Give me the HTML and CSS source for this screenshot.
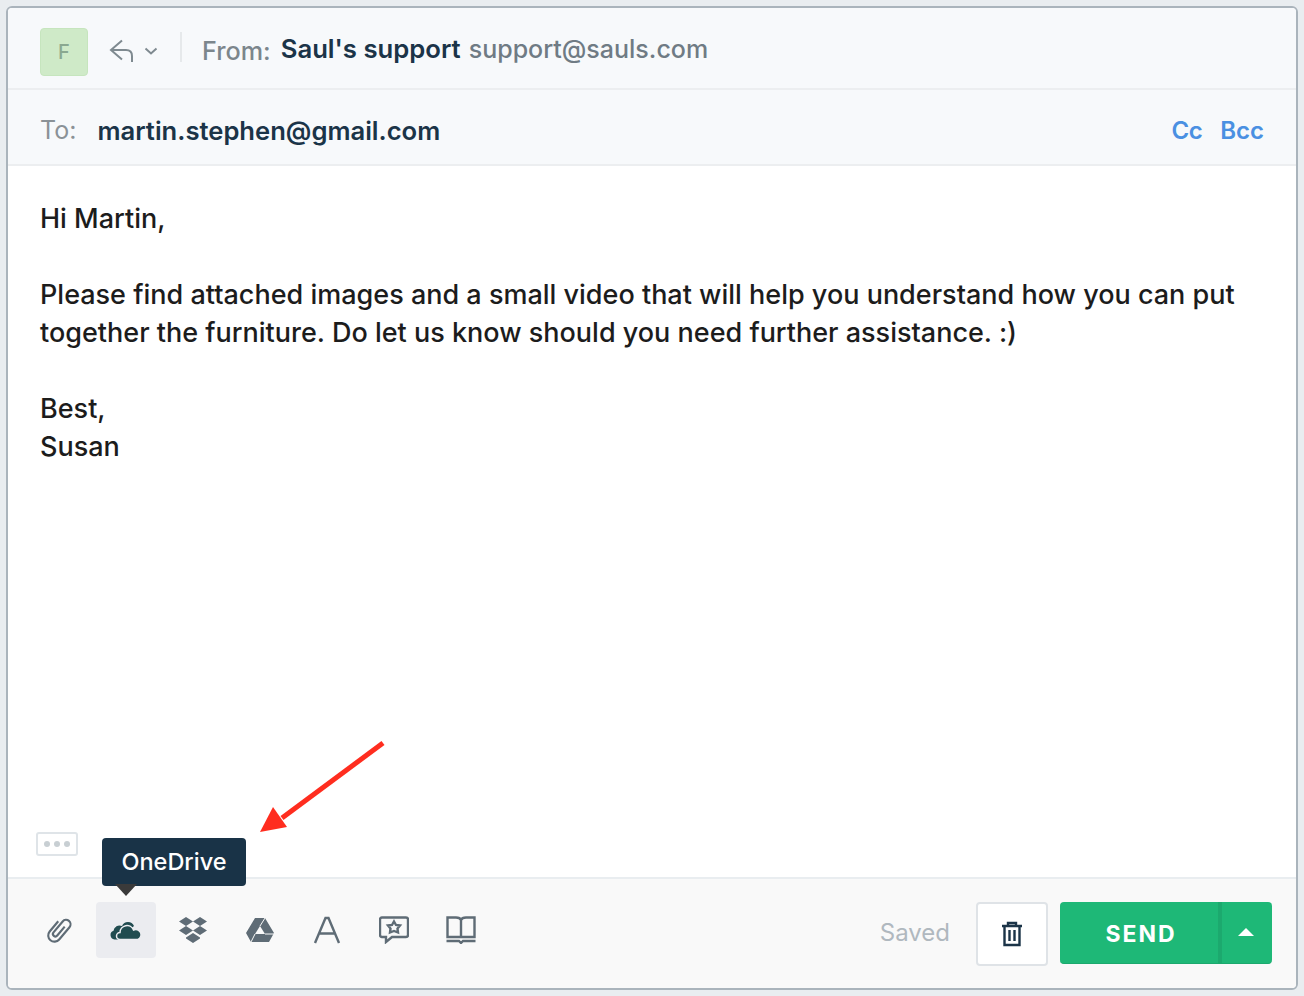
FILE: index.html
```html
<!DOCTYPE html>
<html lang="en">
<head>
    <meta charset="UTF-8">
    <title>Compose</title>
    <link rel="stylesheet" href="styles.css">
</head>
<body>
    <div class="composer">
        <div class="from-row">
            <div class="avatar">F</div>
            <svg class="reply-icon" width="26" height="26" viewBox="0 0 26 26"><path d="M13 1.500 L2 11 L13 20.500 M2.500 11 H17 Q23 11 23 17 V23" /></svg>
            <svg class="caret-icon" width="14" height="8" viewBox="0 0 14 8"><path d="M1.500 1.500 L7 6.500 L12.500 1.500" /></svg>
            <div class="divider"></div>
            <span class="from-label">From:</span>
            <span class="from-name">Saul's support</span>
            <span class="from-mail">support@sauls.com</span>
        </div>
        <div class="to-row">
            <span class="to-label">To:</span>
            <span class="to-mail">martin.stephen@gmail.com</span>
            <a class="cc-link">Cc</a>
            <a class="cc-link">Bcc</a>
        </div>
        <div class="body-area">
            <p>Hi Martin,</p>
            <p>Please find attached images and a small video that will help you understand how you can put together the furniture. Do let us know should you need further assistance. :)</p>
            <p>Best,<br>Susan</p>
            <div class="more-btn"><i></i><i></i><i></i></div>
        </div>
        <div class="toolbar">
            <div class="tool">
                <svg class="stroke-icon" width="32" height="32" viewBox="0 0 36 36"><path transform="rotate(40 18 18) translate(3 1)" d="M17.500 10 V23 a2.750 2.750 0 0 1 -5.500 0 V7 a5 5 0 0 1 10 0 V25 a7 7 0 0 1 -14 0 V10" /></svg>
            </div>
            <div class="tool active">
                <svg width="32" height="20" viewBox="0 0 32 20"><path class="cloud" d="M8 19.500 H4.500 A4.500 4.500 0 0 1 3.500 10.800 A6 6 0 0 1 12 6 A6.500 6.500 0 0 1 24 6 Z" /><path class="cloud cloud-front" d="M10 19.500 A3.500 3.500 0 0 1 10 12.500 A7 7 0 0 1 23.500 10 A5 5 0 0 1 28 19.500 Z" /></svg>
            </div>
            <div class="tool">
                <svg class="fill-icon" width="28" height="26" viewBox="0 0 28 26"><path d="M7 0 L14 4.500 L7 9 L0 4.500 Z M21 0 L28 4.500 L21 9 L14 4.500 Z M7 9 L14 13.500 L7 18 L0 13.500 Z M21 9 L28 13.500 L21 18 L14 13.500 Z M7 20.500 L14 16 L21 20.500 V21.500 L14 26 L7 21.500 Z" /></svg>
            </div>
            <div class="tool">
                <svg class="fill-icon" width="28" height="24" viewBox="0 0 28 24"><path fill-rule="evenodd" d="M9 0 H19 L28 15 L23 24 H5 L0 15 Z M14 8 L9 16 H19 Z" /><path class="drive-line" d="M19 0 L14 8 M28 16 H19 M5 24 L9 16" /></svg>
            </div>
            <div class="tool">
                <svg class="stroke-icon" width="28" height="28" viewBox="0 0 28 28"><path d="M2 27 L12.500 2 H15.500 L26 27 M6.500 17.500 H21.500" /></svg>
            </div>
            <div class="tool">
                <svg class="stroke-icon" width="30" height="28" viewBox="0 0 30 28"><path d="M3 1.500 H27 Q29 1.500 29 3.500 V19 Q29 21 27 21 H13 L7 26 V21 H3 Q1 21 1 19 V3.500 Q1 1.500 3 1.500 Z" /><path d="M15 5.500 L17 9 L21 9.500 L18.500 12.500 L19 16.500 L15 15 L11 16.500 L11.500 12.500 L9 9.500 L13 9 Z" /></svg>
            </div>
            <div class="tool">
                <svg class="stroke-icon" width="30" height="28" viewBox="0 0 30 28"><path d="M1.500 1.500 H10 Q14 1.500 15 4 Q16 1.500 20 1.500 H28.500 V21 H1.500 Z M15 4 V21" /><path d="M0.500 25 H13 L15 27 L17 25 H29.500" /></svg>
            </div>
            <span class="saved">Saved</span>
            <button class="trash-btn">
                <svg width="22" height="26" viewBox="0 0 22 26"><path d="M1 5 H21 M7 5 V2 H15 V5 M3.500 5 V24 H18.500 V5 M8.500 9 V20 M13.500 9 V20" /></svg>
            </button>
            <div class="send-group">
                <button class="send-btn">SEND</button>
                <button class="send-more"><span class="arrow-up"></span></button>
            </div>
        </div>
    </div>

    <!-- tooltip + annotation arrow sit above the composer -->
    <div class="tooltip">OneDrive</div>
    <svg class="annotation" width="130" height="96" viewBox="0 0 130 96"><path class="shaft" d="M123 2 L22 77" /><path class="head" d="M0 91 L13 66 L27 86 Z" /></svg>
</body>
</html>
```

FILE: styles.css
```css
* { box-sizing: border-box; }
html, body { margin: 0; height: 996px; overflow: hidden; }
body { position: relative; padding: 6px; background-color: #e9edf0; font-family: Inter, "Noto Sans", sans-serif; color: #1b3448; }

.composer { display: flex; flex-direction: column; height: 984px; background-color: #fff; border: 2px solid #aab4bc; border-radius: 6px; overflow: hidden; }

.from-row { display: flex; align-items: center; height: 82px; flex: none; padding: 8px 0 0 32px; background-color: #f7f9fb; border-bottom: 2px solid #eceef0; }
.avatar { display: flex; align-items: center; justify-content: center; width: 48px; height: 48px; background-color: #cfeac8; border: 1px solid #c6e5be; border-radius: 4px; color: #8aa890; font-size: 20px; font-weight: 500; }
.reply-icon { margin-left: 21px; fill: none; stroke: #7f8a90; stroke-width: 2; }
.caret-icon { margin: -3px 0 0 9px; fill: none; stroke: #7f8a90; stroke-width: 2; }
.divider { width: 2px; height: 30px; margin: 0 20px 10px 22px; background-color: #e6e9eb; }
.from-label { margin-top: -3px; color: #7c868c; font-size: 25.200px; font-weight: 450; }
.from-name { margin: -8px 0 0 10px; font-size: 25.700px; font-weight: 600; }
.from-mail { margin: -7px 0 0 8px; color: #6f7b84; font-size: 25px; font-weight: 450; }

.to-row { display: flex; align-items: center; height: 76px; flex: none; padding: 6px 32px 0; background-color: #f7f9fb; border-bottom: 2px solid #eceef0; font-size: 25.600px; }
.to-label { width: 57.500px; color: #8b9297; font-size: 25px; }
.to-mail { flex: 1; font-weight: 600; }
.cc-link { margin-left: 18px; color: #4a90e2; font-size: 24px; font-weight: 600; }
.cc-link:first-of-type { letter-spacing: -0.500px; }

.body-area { position: relative; flex: 1; padding: 34px 32px 0; color: #1c1c1c; font-size: 27px; font-weight: 450; line-height: 38px; }
.body-area p { margin: 0 0 38px; }
.more-btn { position: absolute; left: 28px; top: 666px; display: flex; align-items: center; justify-content: center; gap: 4px; width: 42px; height: 24px; border: 2px solid #dfe4e8; border-radius: 3px; }
.more-btn i { width: 6px; height: 6px; background-color: #c8cfd3; border-radius: 50%; }

.toolbar { display: flex; align-items: center; height: 111px; flex: none; padding: 0 24px 0 17px; background-color: #f9f9f9; border-top: 2px solid #e9edf0; }
.tool { display: flex; align-items: center; justify-content: center; width: 60px; height: 56px; margin: 0 3.500px 8px; border-radius: 4px; }
.tool.active { background-color: #ebecf0; }
.stroke-icon { fill: none; stroke: #5f6c76; stroke-width: 2.400; }
.fill-icon { fill: #5f6c76; }
.drive-line { fill: none; stroke: #f9f9f9; stroke-width: 1; }
.cloud { fill: #214c50; }
.cloud-front { stroke: #ebecf0; stroke-width: 1.500; }

.saved { margin-left: auto; margin-bottom: 2px; color: #b0b8bf; font-size: 24px; }
.trash-btn { display: flex; align-items: center; justify-content: center; width: 72px; height: 64px; margin-left: 26px; background-color: #fff; border: 2px solid #dfe3e7; border-radius: 4px; }
.trash-btn svg { fill: none; stroke: #1b3448; stroke-width: 2.400; }
.send-group { display: flex; height: 62px; margin: 0 0 2px 12px; background-color: #1eb877; border-bottom: 1px solid #1ca96e; border-radius: 4px; overflow: hidden; }
.send-btn { width: 162px; padding: 3px 0 0 4px; border: none; border-right: 4px solid #1ca96e; background: none; color: #fff; font-family: inherit; font-size: 23px; font-weight: 700; letter-spacing: 2px; }
.send-more { display: flex; align-items: center; justify-content: center; width: 50px; padding: 0 2px 0 0; border: none; background: none; }
.arrow-up { width: 0; height: 0; border-left: 8px solid transparent; border-right: 8px solid transparent; border-bottom: 8px solid #fff; }

.tooltip { position: absolute; left: 102px; top: 838px; width: 144px; height: 48px; line-height: 47px; text-align: center; background-color: #193347; border-radius: 4px; color: #fff; font-size: 23.500px; font-weight: 450; }
.tooltip::after { content: ""; position: absolute; left: 13px; top: 46px; border-left: 11px solid transparent; border-right: 11px solid transparent; border-top: 12px solid #3a3a3a; }

.annotation { position: absolute; left: 260px; top: 741px; }
.shaft { fill: none; stroke: #ff2d1f; stroke-width: 5; }
.head { fill: #ff2d1f; }
```
